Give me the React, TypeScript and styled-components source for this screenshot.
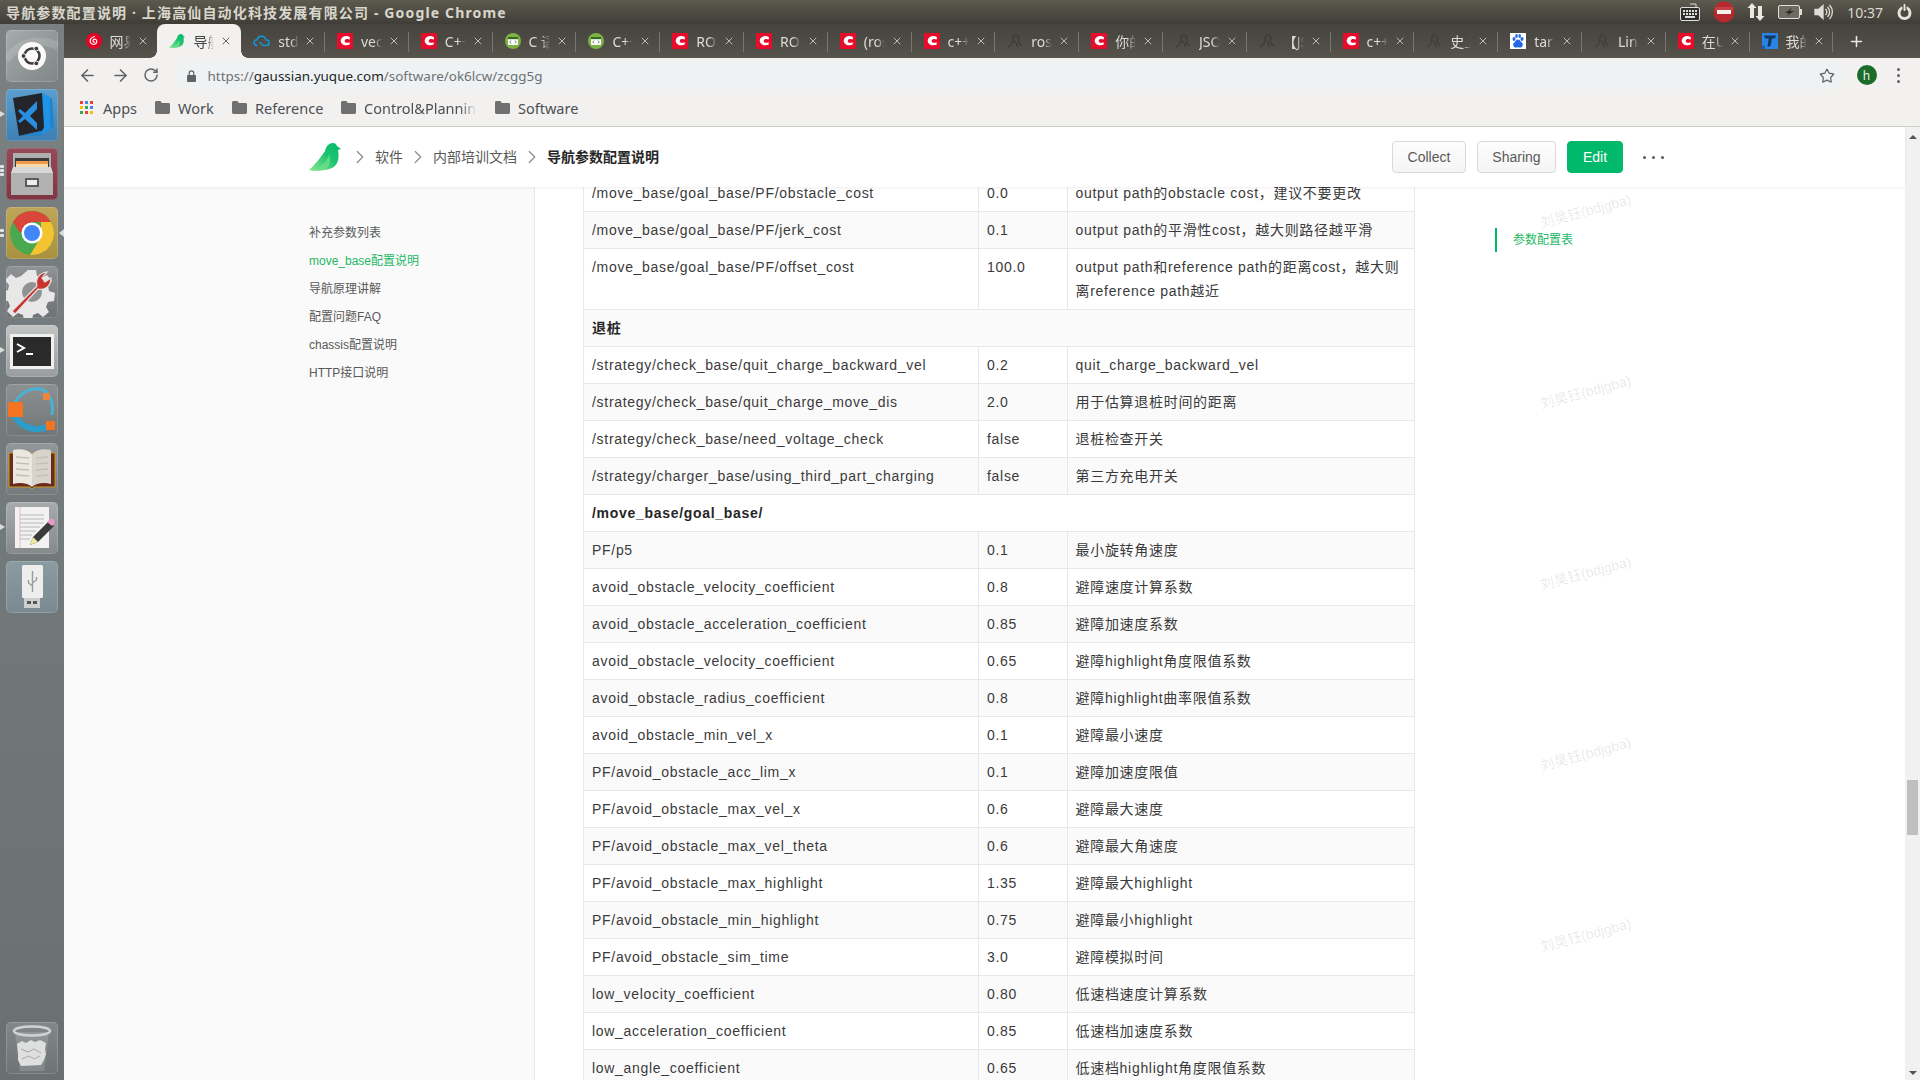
import React from "react";
import styled, { createGlobalStyle } from "styled-components";
import { ArrowLeft, ArrowRight, RotateCw, Star, X, Plus, ChevronRight } from "lucide-react";

const Global = createGlobalStyle`
  html, body { margin: 0; padding: 0; width: 1920px; height: 1080px; overflow: hidden; background: #fff; }
  * { box-sizing: border-box; }
`;

const sans = `"Liberation Sans", "Noto Sans CJK SC", sans-serif`;
const ui = `"Noto Sans", "Noto Sans CJK SC", sans-serif`;

const Screen = styled.div`
  width: 1920px; height: 1080px; display: flex; flex-direction: column; overflow: hidden; font-family: ${sans};
`;
const TitleBar = styled.div`
  height: 24px; flex: none; display: flex; align-items: center; padding: 0 7px 0 6px;
  background: linear-gradient(#5d5b4f, #3f3d37);
`;
const WindowTitle = styled.div`
  font: 700 14px ${ui}; color: #d9d6cc; flex: 1; white-space: nowrap; letter-spacing: 1.15px;
`;
const Tray = styled.div`display: flex; align-items: center; gap: 12.5px; height: 24px;`;
const Clock = styled.span`font: 400 14px ${ui}; color: #dcdad2; margin: 0 0.5px 0 1.5px;`;

const Desk = styled.div`flex: 1; display: flex; min-height: 0;`;
const Dock = styled.div`
  width: 64px; flex: none; padding: 6px 6px 6px; display: flex; flex-direction: column; gap: 7px;
  background: linear-gradient(#7b8183, #687072);
`;
const DockSpacer = styled.div`flex: 1;`;
const Tile = styled.div<{ $bg: string }>`
  width: 52px; height: 52px; border-radius: 5px; position: relative; flex: none;
  background: ${(p) => p.$bg};
  box-shadow: inset 0 0 0 1px rgba(255,255,255,.16);
  svg { display: block; }
`;
const Pip = styled.i<{ $top: number }>`
  position: absolute; left: -6px; top: ${(p) => p.$top}px; width: 0; height: 0;
  border-left: 5px solid #d8dcdc; border-top: 3.5px solid transparent; border-bottom: 3.5px solid transparent;
`;
const Dot = styled.i<{ $top: number }>`
  position: absolute; left: -6px; top: ${(p) => p.$top}px; width: 4px; height: 2.5px; border-radius: 1px; background: #e2e5e5;
`;
const ActiveArrow = styled.i`
  position: absolute; right: -6px; top: 22px; width: 0; height: 0;
  border-right: 5px solid #d8dcdc; border-top: 4px solid transparent; border-bottom: 4px solid transparent;
`;

const Browser = styled.div`flex: 1; min-width: 0; display: flex; flex-direction: column;`;
const TabStrip = styled.div`
  height: 34px; flex: none; display: flex; align-items: stretch; padding-left: 9.6px;
  background: linear-gradient(#45433d, #55534b);
`;
const Tab = styled.div<{ $active?: boolean; $sep?: boolean }>`
  width: 83.8px; flex: none; display: flex; align-items: center; padding-left: 12px; position: relative;
  color: ${(p) => (p.$active ? "#444" : "#dcdcd6")};
  background: ${(p) => (p.$active ? "#f2f1f0" : "transparent")};
  border-radius: ${(p) => (p.$active ? "8px 8px 0 0" : "0")};
  z-index: ${(p) => (p.$active ? 1 : 0)};
  ${(p) => p.$active && `
    &::before, &::after { content: ""; position: absolute; bottom: 0; width: 7px; height: 7px; }
    &::before { left: -7px; background: radial-gradient(circle at 0 0, transparent 6.5px, #f2f1f0 7px); }
    &::after { right: -7px; background: radial-gradient(circle at 100% 0, transparent 6.5px, #f2f1f0 7px); }
  `}
`;
const TabSep = styled.i`
  position: absolute; right: 0; top: 8px; height: 20px; width: 1px; background: #78766e;
`;
const TabLabel = styled.span`
  margin-left: 8px; width: 21px; overflow: hidden; white-space: nowrap; font: 400 14px ${ui};
  -webkit-mask-image: linear-gradient(90deg, #000 60%, transparent);
  mask-image: linear-gradient(90deg, #000 60%, transparent);
`;
const TabClose = styled.span<{ $active?: boolean }>`
  position: absolute; left: 63px; top: 11px; display: flex; color: ${(p) => (p.$active ? "#555" : "#c9c8c2")};
`;
const NewTab = styled.span`display: flex; align-items: center; margin-left: 15px; color: #e8e8e4;`;

const Toolbar = styled.div`
  height: 34px; flex: none; display: flex; align-items: center; background: #f2f1f0; padding: 0 0 0 14px; color: #5f6368;
`;
const NavBtn = styled.span`width: 32.5px; display: flex; align-items: center;`;
const Omni = styled.div`
  width: 1668px; height: 27px; margin: 1px 0 0 0; border-radius: 14px; background: #eff2f3;
  display: flex; align-items: center; padding: 0 9px 0 11px;
`;
const Url = styled.div`
  flex: 1; margin-left: 12px; font: 400 13.45px ${ui}; color: #6d7175; white-space: nowrap;
  b { font-weight: 400; color: #24272a; }
`;
const Avatar = styled.span`
  width: 20px; height: 20px; border-radius: 50%; background: #1b6b2a; color: #e8f2e8; display: flex;
  align-items: center; justify-content: center; font: 400 12px ${ui}; margin: 0 0 0 13px;
`;
const Kebab = styled.span`
  display: flex; flex-direction: column; gap: 3px; margin-left: 20px;
  i { width: 3px; height: 3px; border-radius: 50%; background: #5f6368; }
`;

const Bookmarks = styled.div`
  height: 35px; flex: none; display: flex; align-items: center; background: #f2f1f0; border-bottom: 1px solid #cfcfcd; padding: 0 0 3px 16px;
`;
const Bookmark = styled.span<{ $w: number; $gap?: number }>`
  width: ${(p) => p.$w}px; flex: none; display: flex; align-items: center; gap: ${(p) => p.$gap ?? 8}px; font: 400 14.5px ${ui}; color: #4b4f53; white-space: nowrap; overflow: hidden;
`;
const Fade = styled.span`
  width: 113px; overflow: hidden;
  -webkit-mask-image: linear-gradient(90deg, #000 85%, transparent);
  mask-image: linear-gradient(90deg, #000 85%, transparent);
`;

const Page = styled.div`flex: 1; min-height: 0; display: flex; background: #fff;`;
const PageMain = styled.div`flex: 1; min-width: 0; display: flex; flex-direction: column; position: relative;`;
const Scroll = styled.div`
  width: 15px; flex: none; background: #f1f1f1; display: flex; flex-direction: column; align-items: center; padding: 8px 0 5px;
`;
const ScrollArrow = styled.i<{ $down?: boolean }>`
  width: 0; height: 0; border-left: 4px solid transparent; border-right: 4px solid transparent;
  ${(p) => (p.$down ? "border-top: 4px solid #555;" : "border-bottom: 4px solid #555;")}
`;
const ScrollThumb = styled.div`
  width: 11px; height: 55px; background: #bfbfbf; margin: 641px 0 auto;
`;

const Header = styled.header`
  height: 60px; flex: none; display: flex; align-items: center; padding: 0 241px 0 245px; background: #fff;
  box-shadow: 0 1px 3px rgba(0,0,0,.07); position: relative; z-index: 2;
`;
const Logo = styled.span`display: flex; margin-right: 4px;`;
const Crumb = styled.span<{ $strong?: boolean }>`
  font-size: 14px; margin-bottom: 2px; font-weight: ${(p) => (p.$strong ? 700 : 400)}; color: ${(p) => (p.$strong ? "#262626" : "#595959")}; white-space: nowrap;
`;
const CrumbArrow = styled.span`display: flex; color: #8c8c8c; margin: 0 4px 0 4px;`;
const HeaderSpacer = styled.div`flex: 1;`;
const Btn = styled.button<{ $primary?: boolean; $w: number }>`
  width: ${(p) => p.$w}px; height: 32px; margin-left: 11px; border-radius: 4px; font: 400 14px ${sans};
  color: ${(p) => (p.$primary ? "#fff" : "#595959")};
  background: ${(p) => (p.$primary ? "#00b96b" : "linear-gradient(#fdfdfd, #f5f5f5)")};
  border: 1px solid ${(p) => (p.$primary ? "#00b96b" : "#d9d9d9")};
  padding: 0;
`;
const More = styled.span`
  display: flex; gap: 6px; margin-left: 20px;
  i { width: 3px; height: 3px; border-radius: 50%; background: #595959; }
`;

const Body = styled.div`flex: 1; min-height: 0; display: flex; overflow: hidden;`;
const Sidebar = styled.nav`
  width: 471px; flex: none; background: #fafafa; border-right: 1px solid #e8e8e8; padding: 32px 0 0 245px;
  display: flex; flex-direction: column;
`;
const NavItem = styled.a<{ $active?: boolean }>`
  height: 28px; line-height: 28px; font-size: 12px; white-space: nowrap; color: ${(p) => (p.$active ? "#25b864" : "#595959")};
`;
const Content = styled.main`width: 879px; flex: none; padding-left: 48px;`;
const Table = styled.table`
  width: 831px; margin-top: -13px; border-collapse: collapse; table-layout: fixed; font-size: 14px; letter-spacing: .05em; color: #3a3a3a;
`;
const Row = styled.tr<{ $zebra: boolean }>`background: ${(p) => (p.$zebra ? "#fafafa" : "#fff")};`;
const Col = styled.col<{ $w: number }>`width: ${(p) => p.$w}px;`;
const Cell = styled.td<{ $strong?: boolean }>`
  border: 1px solid #e8e8e8; padding: 6px 8px; line-height: 24px; vertical-align: top;
  font-weight: ${(p) => (p.$strong ? 700 : 400)}; color: ${(p) => (p.$strong ? "#262626" : "inherit")};
  word-break: break-word;
`;
const Outline = styled.aside`margin: 41px 0 0 81px;`;
const OutlineItem = styled.div`
  height: 24px; border-left: 2px solid #00b96b; padding-left: 16px; font-size: 12px; line-height: 24px; color: #25b864; white-space: nowrap;
`;
const Marks = styled.div`
  position: absolute; left: 1477px; top: 0; width: 90px; display: flex; flex-direction: column; align-items: center; pointer-events: none;
  padding-top: 74px; gap: 161px; z-index: 3;
`;
const Mark = styled.div`
  font-size: 14px; height: 20px; line-height: 20px; white-space: nowrap; color: rgba(0,0,0,.1); transform: rotate(-15deg);
`;

/* ---------- favicons ---------- */
const Red = () => (
  <svg width="16" height="16" viewBox="0 0 16 16"><rect width="16" height="16" fill="#e60d2c" /><path d="M13 4.200C9.800 2 4.700 3 3.800 7c-.8 4 4.300 6.600 9 4.600l-.2-2.400C10 10.400 7.500 9.800 7.700 7.800 7.900 5.800 10.500 5.500 12.700 6.600z" fill="#fff" /></svg>
);
const Netease = () => (
  <svg width="16" height="16" viewBox="0 0 16 16"><circle cx="8" cy="8" r="8" fill="#e60026" /><path d="M9 3.500C6 4 4 6 4.200 8.500c.2 2.400 3 3.500 5 2.500 2-1 2-3.500.6-4.600C8.500 5.500 6.800 6.500 7 8c.1 1 1.200 1.500 2 1" fill="none" stroke="#fff" strokeWidth="1.200" /></svg>
);
const Bird = ({ w = 16, h = 16, id = "bg" }: { w?: number; h?: number; id?: string }) => (
  <svg width={w} height={h} viewBox="0 0 32 28">
    <defs><linearGradient id={id} x1="0" y1="1" x2="1" y2="0"><stop offset="0" stopColor="#8be58f" /><stop offset=".55" stopColor="#1fc46f" /><stop offset="1" stopColor="#00b96b" /></linearGradient></defs>
    <path d="M0 27C6 22 12 14 16 8 17 3 20 0 24 0c2 0 3 1 4 3l4 3-3 1c1 5 1 12-3 16C20 28 8 28 0 27z" fill={`url(#${id})`} />
    <path d="M1 27.500C9 26.500 16 22 20 12c2 6 1 11-3 14-4 2-10 2-16 1.500z" fill="#6fe08c" opacity=".75" />
  </svg>
);
const Cloud = () => (
  <svg width="17" height="16" viewBox="0 0 17 16" fill="none" stroke="#1296db" strokeWidth="1.500"><path d="M4.500 12.500C2.500 12.500 1 11.200 1 9.500S2.300 6.700 4 6.800C4.500 4.500 6.300 3.200 8.500 3.200c2.200 0 4 1.500 4.300 3.600 2 .1 3.400 1.300 3.400 2.900 0 1.700-1.400 2.800-3.200 2.800H10L6.500 9" /></svg>
);
const Code = () => (
  <svg width="16" height="16" viewBox="0 0 16 16"><circle cx="8" cy="8" r="8" fill="#7cb342" /><rect x="3" y="4" width="10" height="8" rx="1" fill="#fff" /><rect x="3" y="4" width="10" height="2.200" fill="#33691e" /><path d="M6 7.500 4.800 9 6 10.500M10 7.500 11.200 9 10 10.500" stroke="#455a64" strokeWidth=".8" fill="none" /></svg>
);
const Ghost = () => (
  <svg width="16" height="16" viewBox="0 0 16 16" fill="none" stroke="#3b3a35" strokeWidth="1.300"><path d="M1 14C4 13 6 9 6 5c0-2 2-3.500 3.500-3 2 .6 2.500 3 2 5-.5 2 1 4.500 3 6M7 8c2 1 3 3 3 6" /></svg>
);
const Baidu = () => (
  <svg width="16" height="16" viewBox="0 0 16 16"><rect width="16" height="16" fill="#fff" /><g fill="#2468e8"><ellipse cx="4" cy="6" rx="1.500" ry="2" /><ellipse cx="12" cy="6" rx="1.500" ry="2" /><ellipse cx="6.500" cy="3" rx="1.300" ry="1.900" /><ellipse cx="9.700" cy="3" rx="1.300" ry="1.900" /><path d="M8 6.500c-2 0-2.500 2-4 3.200C2.500 11 3 14.500 6 14.500c1 0 1.500-.3 2-.3s1 .3 2 .3c3 0 3.500-3.500 2-4.800C10.500 8.500 10 6.500 8 6.500z" /></g></svg>
);
const Tea = () => (
  <svg width="16" height="16" viewBox="0 0 16 16"><rect width="16" height="16" fill="#2b83e6" /><path d="M2 2.500h12l-1 3H10L8.500 13 5.500 14 6.700 5.500H3z" fill="#12385f" /><path d="M0 13l3-1v4H0z" fill="#1a5fb0" /></svg>
);
const LockIcon = () => (
  <svg width="9" height="12" viewBox="0 0 9 12"><path d="M1 5h7a1 1 0 0 1 1 1v5a1 1 0 0 1-1 1H1a1 1 0 0 1-1-1V6a1 1 0 0 1 1-1z" fill="#5f6368" /><path d="M2.200 5.500V3.200a2.300 2.300 0 0 1 4.600 0v2.300" fill="none" stroke="#5f6368" strokeWidth="1.200" /></svg>
);
const favicon: Record<string, React.ReactNode> = {
  n: <Netease />, b: <Bird id="tabbird" />, o: <Cloud />, c: <Red />, g: <Code />, h: <Ghost />, d: <Baidu />, t: <Tea />,
};
const tabs: [string, string][] = [
  ["n", "网易云音乐"], ["b", "导航参数"], ["o", "std::map"], ["c", "vector"], ["c", "C++ map"], ["g", "C 语言"], ["g", "C++ 类"],
  ["c", "ROS"], ["c", "ROS"], ["c", "(ros)"], ["c", "c++ std"], ["h", "ros"], ["c", "你的"], ["h", "JSON"], ["h", "【JS"],
  ["c", "c++ st"], ["h", "史上"], ["d", "tar"], ["h", "Linux"], ["c", "在Ubuntu"], ["t", "我的"],
];

/* ---------- dock drawings ---------- */
const UbuntuIcon = () => (
  <svg width="52" height="52" viewBox="0 0 52 52">
    <path d="M0 30C14 10 34 8 52 16" stroke="rgba(255,255,255,.14)" strokeWidth="8" fill="none" />
    <circle cx="26" cy="26" r="14" fill="#fafafa" />
    <circle cx="26" cy="26" r="7.500" fill="none" stroke="#3d3d3d" strokeWidth="2.600" />
    <g fill="#3d3d3d" stroke="#fafafa" strokeWidth="1"><circle cx="17.500" cy="26" r="2.400" /><circle cx="30.300" cy="18.600" r="2.400" /><circle cx="30.300" cy="33.400" r="2.400" /></g>
  </svg>
);
const VSCodeIcon = () => (
  <svg width="52" height="52" viewBox="0 0 52 52">
    <path d="M7 9 36 4 44 40 13 47z" fill="#23252b" />
    <path d="M36 4 46 10 48 38 34 47 13 47 44 40z" fill="#2582c8" />
    <path d="M36 4 44 8 44 40 34 47 38 38z" fill="#1f93e8" />
    <path d="M30 15 18 27 13 23 11 25 16 30 11 35 13 37 18 33 30 44V37L23 30 30 23z" fill="#2a8fe0" transform="translate(1 -3)" />
  </svg>
);
const FilesIcon = () => (
  <svg width="52" height="52" viewBox="0 0 52 52">
    <path d="M7 5h38v18H7z" fill="#aeaeae" /><path d="M9 10h34v13H9z" fill="#3b3b3b" />
    <path d="M10 13h32v5H10z" fill="#ee9a4b" /><path d="M10 16h32v3H10z" fill="#fbd9a8" />
    <path d="M7 19h38v28H7z" fill="#bdbdbd" /><path d="M7 19h38l2 6H5z" fill="#d8d8d8" /><path d="M5 25h42v22H5z" fill="#b2b2b2" />
    <rect x="19" y="30" width="14" height="9" rx="1" fill="#5a5a5a" /><rect x="21" y="32" width="10" height="5" fill="#ededed" />
  </svg>
);
const ChromeIcon = () => (
  <svg width="52" height="52" viewBox="0 0 52 52">
    <circle cx="26" cy="26" r="22" fill="#4aa84f" />
    <path d="M26 4A22 22 0 0 1 45 15L26 15 14 26 7 15A22 22 0 0 1 26 4z" fill="#d9463a" />
    <path d="M45 15A22 22 0 0 1 24 48L35 30 35 15z" fill="#f4c430" />
    <circle cx="26" cy="26" r="10.500" fill="#fff" /><circle cx="26" cy="26" r="8" fill="#4285f4" />
  </svg>
);
const SettingsIcon = () => (
  <svg width="52" height="52" viewBox="0 0 52 52">
    <path d="M24 5h8l1 6 5 2 5-3 5 6-4 5 1 5 6 2-1 8-6 1-2 5 3 5-6 5-5-4-5 2-1 5h-8l-1-5-5-2-5 4-6-6 3-5-2-5-6-1V27l6-2 1-5-4-5 6-6 5 4 5-2z" fill="#e8e8e8" transform="translate(-2 -1)" />
    <circle cx="26" cy="26" r="10" fill="#8f9393" />
    <path d="M7 44 31 20C29 13 33 7 41 6l-5 6 3 4 6-4c0 8-6 13-13 11L10 47c-2 1-4-1-3-3z" fill="#c9332e" stroke="#e2e2e2" strokeWidth="1.200" />
  </svg>
);
const TerminalIcon = () => (
  <svg width="52" height="52" viewBox="0 0 52 52">
    <rect x="4" y="9" width="44" height="35" fill="#f0f0f0" /><rect x="7" y="12" width="38" height="29" fill="#2a2a2a" />
    <path d="M11 19l7 4-7 4" fill="none" stroke="#fff" strokeWidth="2" /><path d="M20 29h7" stroke="#fff" strokeWidth="2" />
  </svg>
);
const OrangeIcon = () => (
  <svg width="52" height="52" viewBox="0 0 52 52">
    <path d="M8 28C6 15 20 3 34 5c10 2 14 14 12 26" fill="none" stroke="#48b2d6" strokeWidth="3" />
    <path d="M8 28c2 13 20 22 36 14" fill="none" stroke="#2c9ccb" strokeWidth="6" />
    <rect x="2" y="18" width="15" height="15" rx="2" fill="#f47421" /><rect x="37" y="9" width="7" height="7" rx="1" fill="#f0843c" /><rect x="40" y="37" width="9" height="9" rx="1" fill="#f47421" />
  </svg>
);
const BookIcon = () => (
  <svg width="52" height="52" viewBox="0 0 52 52">
    <path d="M3 10h46v34H28l-2 2-2-2H3z" fill="#6b2a1e" stroke="#c89a1c" />
    <path d="M7 7C15 5 22 7 26 11v33C22 40 14 39 7 41z" fill="#ebe8e2" /><path d="M45 7C37 5 30 7 26 11v33c4-4 12-5 19-3z" fill="#d9d4cb" />
    <g stroke="#c4c0b8" strokeWidth="1.500"><path d="M10 14l13 1M10 20l13 1M10 26l13 1M10 32l13 1M30 15l12-1M30 21l12-1M30 27l12-1M30 33l12-1" /></g>
  </svg>
);
const EditorIcon = () => (
  <svg width="52" height="52" viewBox="0 0 52 52">
    <rect x="9" y="5" width="34" height="41" fill="#f2f2f2" />
    <g stroke="#a9a9a9" strokeWidth=".8"><path d="M14 13h24M14 17h24M14 21h24M14 25h20M14 29h16M14 33h12M14 37h10" /></g>
    <path d="M14 5v41" stroke="#e8a9b0" strokeWidth=".8" />
    <path d="M24 43l3-8 16-16 5 5-16 16z" fill="#3a3a3a" /><path d="M41 20l3-3c1-1 3 0 4 1s1 3 0 4l-2 2z" fill="#e99ac4" /><path d="M24 43l3-8 5 5z" fill="#f0e7a0" />
  </svg>
);
const UsbIcon = () => (
  <svg width="52" height="52" viewBox="0 0 52 52">
    <rect x="16" y="4" width="21" height="33" rx="1.500" fill="#eeeeee" /><rect x="18" y="37" width="16" height="10" fill="#cfcfcf" />
    <rect x="21" y="40" width="4" height="3" fill="#555" /><rect x="27" y="40" width="4" height="3" fill="#555" />
    <path d="M26.500 10v21M26.500 25l-4-3v-3M26.500 22l4-3v-3" stroke="#9a9a9a" strokeWidth="1.400" fill="none" />
  </svg>
);
const TrashIcon = () => (
  <svg width="52" height="52" viewBox="0 0 52 52">
    <path d="M9 10 14 49h24l5-39z" fill="rgba(255,255,255,.14)" />
    <ellipse cx="26" cy="9" rx="18" ry="4.500" fill="none" stroke="#d2d2d2" strokeWidth="2.500" />
    <path d="M11 22l5-3 4 2 5-3 4 2 5-2 6 3-1 6 1 5-2 6-3 5-20 1-3-6 0-6z" fill="#dfdfdf" />
    <path d="M15 27l7 3 6-3 7 4M16 37l7-3 5 3 6-3" stroke="#a8a8a8" fill="none" />
  </svg>
);

const Folder = () => (
  <svg width="15" height="13" viewBox="0 0 15 13"><path d="M0 1.500C0 .7.600 0 1.400 0h4l1.500 2h6.700c.8 0 1.400.6 1.400 1.400v8.200c0 .8-.6 1.400-1.400 1.400H1.400C.6 13 0 12.400 0 11.600z" fill="#707070" /></svg>
);
const AppsIcon = () => (
  <svg width="13" height="13" viewBox="0 0 13 13">
    {["#ea4335", "#4285f4", "#ea4335", "#fbbc05", "#34a853", "#4285f4", "#34a853", "#ea4335", "#fbbc05"].map((c, i) => (
      <rect key={i} x={(i % 3) * 5} y={Math.floor(i / 3) * 5} width="3" height="3" fill={c} />
    ))}
  </svg>
);

type Item = { s: string } | { a: string; b: string; c: string };
const rows: Item[] = [
  { a: "/move_base/goal_base/PF/obstacle_cost", b: "0.0", c: "output path的obstacle cost，建议不要更改" },
  { a: "/move_base/goal_base/PF/jerk_cost", b: "0.1", c: "output path的平滑性cost，越大则路径越平滑" },
  { a: "/move_base/goal_base/PF/offset_cost", b: "100.0", c: "output path和reference path的距离cost，越大则离reference path越近" },
  { s: "退桩" },
  { a: "/strategy/check_base/quit_charge_backward_vel", b: "0.2", c: "quit_charge_backward_vel" },
  { a: "/strategy/check_base/quit_charge_move_dis", b: "2.0", c: "用于估算退桩时间的距离" },
  { a: "/strategy/check_base/need_voltage_check", b: "false", c: "退桩检查开关" },
  { a: "/strategy/charger_base/using_third_part_charging", b: "false", c: "第三方充电开关" },
  { s: "/move_base/goal_base/" },
  { a: "PF/p5", b: "0.1", c: "最小旋转角速度" },
  { a: "avoid_obstacle_velocity_coefficient", b: "0.8", c: "避障速度计算系数" },
  { a: "avoid_obstacle_acceleration_coefficient", b: "0.85", c: "避障加速度系数" },
  { a: "avoid_obstacle_velocity_coefficient", b: "0.65", c: "避障highlight角度限值系数" },
  { a: "avoid_obstacle_radius_coefficient", b: "0.8", c: "避障highlight曲率限值系数" },
  { a: "avoid_obstacle_min_vel_x", b: "0.1", c: "避障最小速度" },
  { a: "PF/avoid_obstacle_acc_lim_x", b: "0.1", c: "避障加速度限值" },
  { a: "PF/avoid_obstacle_max_vel_x", b: "0.6", c: "避障最大速度" },
  { a: "PF/avoid_obstacle_max_vel_theta", b: "0.6", c: "避障最大角速度" },
  { a: "PF/avoid_obstacle_max_highlight", b: "1.35", c: "避障最大highlight" },
  { a: "PF/avoid_obstacle_min_highlight", b: "0.75", c: "避障最小highlight" },
  { a: "PF/avoid_obstacle_sim_time", b: "3.0", c: "避障模拟时间" },
  { a: "low_velocity_coefficient", b: "0.80", c: "低速档速度计算系数" },
  { a: "low_acceleration_coefficient", b: "0.85", c: "低速档加速度系数" },
  { a: "low_angle_coefficient", b: "0.65", c: "低速档highlight角度限值系数" },
];
const navItems = ["补充参数列表", "move_base配置说明", "导航原理讲解", "配置问题FAQ", "chassis配置说明", "HTTP接口说明"];

export default function App() {
  return (
    <Screen>
      <Global />
      <TitleBar>
        <WindowTitle>导航参数配置说明 · 上海高仙自动化科技发展有限公司 - Google Chrome</WindowTitle>
        <Tray>
          <svg width="20" height="20" viewBox="0 0 20 20"><path d="M16 5V2H10" stroke="#ddd" fill="none" /><rect x=".5" y="5.500" width="19" height="13" rx="1.500" fill="#2f2e2a" stroke="#ddd" /><g fill="#ddd"><path d="M3 8h2v2H3zM6 8h2v2H6zM9 8h2v2H9zM12 8h2v2h-2zM15 8h2v2h-2zM3 11h2v2H3zM6 11h2v2H6zM9 11h2v2H9zM12 11h2v2h-2zM15 11h2v2h-2zM5 14h10v2H5z" /></g></svg>
          <svg width="22" height="22" viewBox="0 0 22 22"><circle cx="11" cy="11" r="10.500" fill="#b8282d" /><path d="M2 6h18v4H2z" fill="rgba(255,255,255,.12)" /><rect x="4" y="9" width="14" height="4" fill="#f4f0ec" /></svg>
          <svg width="18" height="20" viewBox="0 0 18 20" fill="#e8e8e2"><path d="M5 1 9.500 6H7v10H3V6H.500zM13 19 8.500 14H11V4h4v10h2.500z" /></svg>
          <svg width="24" height="14" viewBox="0 0 24 14"><rect x=".5" y=".5" width="21" height="13" rx="1.500" fill="#6e6c63" stroke="#e0e0da" /><rect x="22" y="4" width="2" height="6" fill="#e0e0da" /><path d="M14 3 7 8h4l-2 3 7-5h-4z" fill="#2d2c28" /></svg>
          <svg width="19" height="18" viewBox="0 0 19 18" fill="none" stroke="#deded8" strokeWidth="1.300"><path d="M1 6.500h3.500L9 2.500v13l-4.500-4H1z" fill="#deded8" /><path d="M11.500 6a4 4 0 0 1 0 6M13.500 4a7 7 0 0 1 0 10M15.500 2a10 10 0 0 1 0 14" /></svg>
          <Clock>10:37</Clock>
          <svg width="17" height="18" viewBox="0 0 17 18"><circle cx="8.500" cy="10" r="5.500" fill="none" stroke="#e4e4de" strokeWidth="3" /><path d="M8.500 1v8" stroke="#3f3d37" strokeWidth="4" /><path d="M8.500 1v7" stroke="#e4e4de" strokeWidth="2" /></svg>
        </Tray>
      </TitleBar>
      <Desk>
        <Dock>
          <Tile $bg="linear-gradient(135deg,#a6acac,#7f8686)"><UbuntuIcon /></Tile>
          <Tile $bg="linear-gradient(#5a9fd0,#3d7fb3)"><Pip $top={22} /><VSCodeIcon /></Tile>
          <Tile $bg="linear-gradient(#934a55,#7d3744)"><Dot $top={17} /><Dot $top={21} /><Dot $top={25} /><FilesIcon /></Tile>
          <Tile $bg="linear-gradient(#bda65a,#a8923f)"><Dot $top={22} /><Dot $top={27} /><ChromeIcon /><ActiveArrow /></Tile>
          <Tile $bg="linear-gradient(#8f9393,#6e7273)"><SettingsIcon /></Tile>
          <Tile $bg="linear-gradient(#c2c4c4,#9a9d9d)"><Pip $top={22} /><TerminalIcon /></Tile>
          <Tile $bg="linear-gradient(#8d9192,#707576)"><OrangeIcon /></Tile>
          <Tile $bg="linear-gradient(#92979a,#757a7c)"><BookIcon /></Tile>
          <Tile $bg="linear-gradient(#a8abab,#85898a)"><Pip $top={22} /><EditorIcon /></Tile>
          <Tile $bg="linear-gradient(#8a9ba1,#7a8a90)"><UsbIcon /></Tile>
          <DockSpacer />
          <Tile $bg="linear-gradient(#82888a,#6e7476)"><TrashIcon /></Tile>
        </Dock>
        <Browser>
          <TabStrip>
            {tabs.map(([k, label], i) => (
              <Tab key={i} $active={i === 1}>
                {favicon[k]}
                <TabLabel>{label}</TabLabel>
                <TabClose $active={i === 1}><X size={12} strokeWidth={1.8} /></TabClose>
                {i > 1 && <TabSep />}
              </Tab>
            ))}
            <NewTab><Plus size={17} strokeWidth={2.2} /></NewTab>
          </TabStrip>
          <Toolbar>
            <NavBtn><ArrowLeft size={19} strokeWidth={2} /></NavBtn>
            <NavBtn><ArrowRight size={19} strokeWidth={2} /></NavBtn>
            <NavBtn><RotateCw size={16} strokeWidth={2.2} /></NavBtn>
            <Omni>
              <LockIcon />
              <Url>https://<b>gaussian.yuque.com</b>/software/ok6lcw/zcgg5g</Url>
              <Star size={16} strokeWidth={1.8} />
            </Omni>
            <Avatar>h</Avatar>
            <Kebab><i /><i /><i /></Kebab>
          </Toolbar>
          <Bookmarks>
            <Bookmark $w={75} $gap={10}><AppsIcon /><span>Apps</span></Bookmark>
            <Bookmark $w={77}><Folder /><span>Work</span></Bookmark>
            <Bookmark $w={109}><Folder /><span>Reference</span></Bookmark>
            <Bookmark $w={154}><Folder /><Fade>Control&amp;Planning</Fade></Bookmark>
            <Bookmark $w={100}><Folder /><span>Software</span></Bookmark>
          </Bookmarks>
          <Page>
            <PageMain>
              <Header>
                <Logo><Bird w={32} h={28} id="headerbird" /></Logo>
                <CrumbArrow><ChevronRight size={22} strokeWidth={1.3} /></CrumbArrow>
                <Crumb>软件</Crumb>
                <CrumbArrow><ChevronRight size={22} strokeWidth={1.3} /></CrumbArrow>
                <Crumb>内部培训文档</Crumb>
                <CrumbArrow><ChevronRight size={22} strokeWidth={1.3} /></CrumbArrow>
                <Crumb $strong>导航参数配置说明</Crumb>
                <HeaderSpacer />
                <Btn $w={74}>Collect</Btn>
                <Btn $w={79}>Sharing</Btn>
                <Btn $w={56} $primary>Edit</Btn>
                <More><i /><i /><i /></More>
              </Header>
              <Body>
                <Sidebar>
                  {navItems.map((n, i) => (
                    <NavItem key={n} $active={i === 1}>{n}</NavItem>
                  ))}
                </Sidebar>
                <Content>
                  <Table>
                    <colgroup>
                      <Col $w={395} />
                      <Col $w={88.5} />
                      <Col $w={347.5} />
                    </colgroup>
                    <tbody>
                      {rows.map((r, i) => (
                        <Row key={i} $zebra={i % 2 === 1}>
                          {"s" in r ? (
                            <Cell colSpan={3} $strong>{r.s}</Cell>
                          ) : (
                            <>
                              <Cell>{r.a}</Cell>
                              <Cell>{r.b}</Cell>
                              <Cell>{r.c}</Cell>
                            </>
                          )}
                        </Row>
                      ))}
                    </tbody>
                  </Table>
                </Content>
                <Outline><OutlineItem>参数配置表</OutlineItem></Outline>
              </Body>
              <Marks>
                {[0, 1, 2, 3, 4].map((i) => <Mark key={i}>刘昊钰(bdjgba)</Mark>)}
              </Marks>
            </PageMain>
            <Scroll>
              <ScrollArrow />
              <ScrollThumb />
              <ScrollArrow $down />
            </Scroll>
          </Page>
        </Browser>
      </Desk>
    </Screen>
  );
}
